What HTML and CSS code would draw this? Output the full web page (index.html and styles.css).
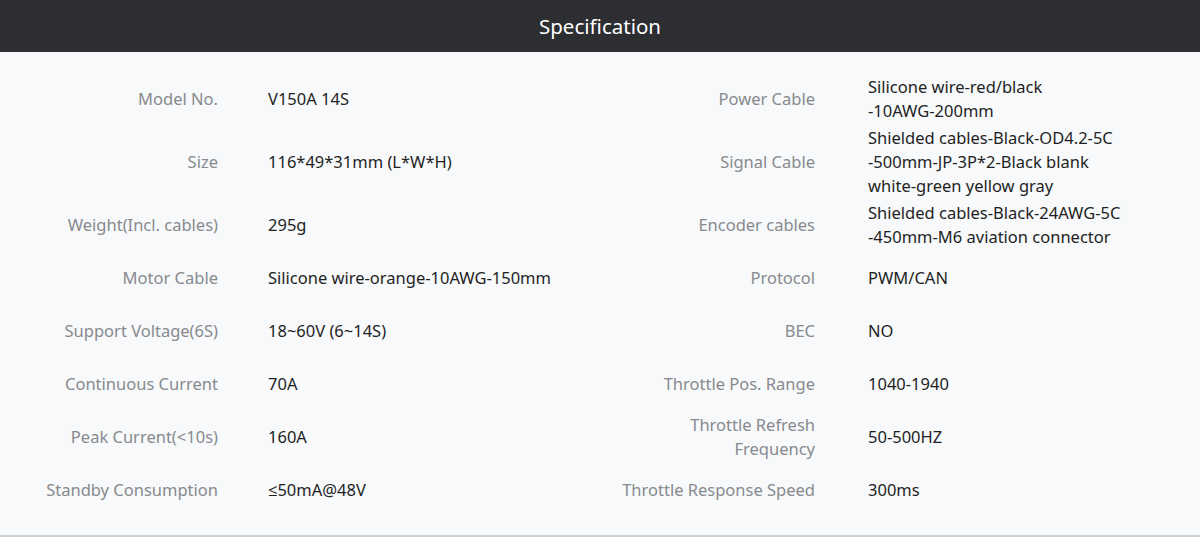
FILE: index.html
```html
<!DOCTYPE html>
<html lang="en">
<head>
<meta charset="utf-8">
<title>Specification</title>
<link rel="stylesheet" href="styles.css">
</head>
<body>
<div class="page">
  <header class="head">Specification</header>
  <section class="spec">
    <div class="row">
      <div class="label">Model No.</div>
      <div class="value">V150A 14S</div>
      <div class="label">Power Cable</div>
      <div class="value">Silicone wire-red/black<br>-10AWG-200mm</div>
    </div>
    <div class="row">
      <div class="label">Size</div>
      <div class="value">116*49*31mm (L*W*H)</div>
      <div class="label">Signal Cable</div>
      <div class="value">Shielded cables-Black-OD4.2-5C<br>-500mm-JP-3P*2-Black blank<br>white-green yellow gray</div>
    </div>
    <div class="row">
      <div class="label">Weight(Incl. cables)</div>
      <div class="value">295g</div>
      <div class="label">Encoder cables</div>
      <div class="value">Shielded cables-Black-24AWG-5C<br>-450mm-M6 aviation connector</div>
    </div>
    <div class="row">
      <div class="label">Motor Cable</div>
      <div class="value">Silicone wire-orange-10AWG-150mm</div>
      <div class="label">Protocol</div>
      <div class="value">PWM/CAN</div>
    </div>
    <div class="row">
      <div class="label">Support Voltage(6S)</div>
      <div class="value">18~60V (6~14S)</div>
      <div class="label">BEC</div>
      <div class="value">NO</div>
    </div>
    <div class="row">
      <div class="label">Continuous Current</div>
      <div class="value">70A</div>
      <div class="label">Throttle Pos. Range</div>
      <div class="value">1040-1940</div>
    </div>
    <div class="row">
      <div class="label">Peak Current(&lt;10s)</div>
      <div class="value">160A</div>
      <div class="label">Throttle Refresh<br>Frequency</div>
      <div class="value">50-500HZ</div>
    </div>
    <div class="row">
      <div class="label">Standby Consumption</div>
      <div class="value">≤50mA@48V</div>
      <div class="label">Throttle Response Speed</div>
      <div class="value">300ms</div>
    </div>
  </section>
</div>
</body>
</html>
```

FILE: styles.css
```css
* { box-sizing: border-box; }
html, body { margin: 0; padding: 0; }
body {
  background: #f7f9fb;
  font-family: "Noto Sans", "Open Sans", "Liberation Sans", sans-serif;
  width: 1200px;
  height: 537px;
  overflow: hidden;
}
.page {
  height: 537px;
  border-bottom: 2px solid #cdd1d8;
  display: flex;
  flex-direction: column;
}
.head {
  height: 52px;
  background: #2d2e32;
  color: #ffffff;
  font-size: 20.5px;
  display: flex;
  align-items: center;
  justify-content: center;
}
.spec {
  padding-top: 20px;
  display: flex;
  flex-direction: column;
}
.row {
  display: grid;
  grid-template-columns: 218px 382px 215px 1fr;
  min-height: 53px;
  padding: 0.5px 0;
  align-items: center;
  font-size: 16.5px;
  line-height: 24px;
}
.label {
  text-align: right;
  color: #888a8d;
}
.value {
  padding-left: 50px;
  color: #1f1f1f;
}
.row > .value:last-child {
  padding-left: 53px;
}
```
